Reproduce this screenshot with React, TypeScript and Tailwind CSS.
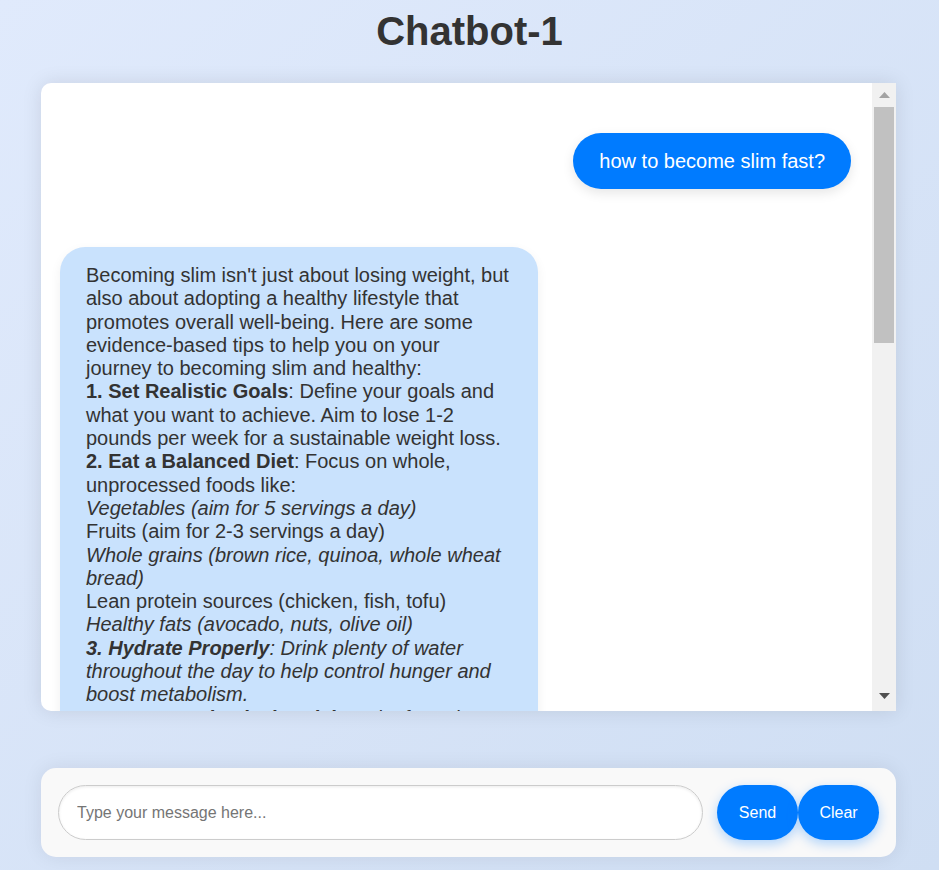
import React, { useState } from 'react';

type Message = { id: number; from: 'user' | 'bot' };

const messages: Message[] = [
  { id: 1, from: 'user' },
  { id: 2, from: 'bot' },
];

const BotReply: React.FC = () => (
  <>
    Becoming slim isn't just about losing weight, but also about adopting a healthy lifestyle that promotes overall
    well-being. Here are some evidence-based tips to help you on your journey to becoming slim and healthy:
    <br />
    <strong>1. Set Realistic Goals</strong>: Define your goals and what you want to achieve. Aim to lose 1-2 pounds
    per week for a sustainable weight loss.
    <br />
    <strong>2. Eat a Balanced Diet</strong>: Focus on whole, unprocessed foods like:
    <br />
    <em>Vegetables (aim for 5 servings a day)</em>
    <br />
    Fruits (aim for 2-3 servings a day)
    <br />
    <em>Whole grains (brown rice, quinoa, whole wheat bread)</em>
    <br />
    Lean protein sources (chicken, fish, tofu)
    <br />
    <em>
      Healthy fats (avocado, nuts, olive oil)
      <br />
      <strong>3. Hydrate Properly</strong>: Drink plenty of water throughout the day to help control hunger and boost
      metabolism.
      <br />
      <strong>4. Increase Physical Activity</strong>: Aim for at least 150 minutes of moderate-intensity exercise per
      week.
    </em>
  </>
);

const FakeScrollbar: React.FC = () => (
  <div className="w-[24px] shrink-0 bg-[#f1f1f1] flex flex-col">
    <div className="h-[23px] flex items-center justify-center">
      <svg width="11" height="6" viewBox="0 0 11 6">
        <polygon points="0,6 5.5,0 11,6" fill="#a3a3a3" />
      </svg>
    </div>
    <div className="mt-px mx-[2px] h-[236px] bg-[#c1c1c1]" />
    <div className="flex-1" />
    <div className="h-[25px] flex items-start justify-center pt-[7px]">
      <svg width="11" height="6" viewBox="0 0 11 6">
        <polygon points="0,0 11,0 5.5,6" fill="#505050" />
      </svg>
    </div>
  </div>
);

export default function App() {
  const [text, setText] = useState('');

  return (
    <div className="min-h-screen bg-linear-to-br from-[#e0eafc] to-[#cfdef3] font-['Liberation_Sans',Arial,sans-serif] pt-[8px] px-[41px] pb-[13px]">
      <h1 className="text-center text-[40px] leading-[46px] font-bold text-[#333]">Chatbot-1</h1>

      <div className="mt-[29px] w-[855px] h-[628px] bg-white rounded-l-[10px] shadow-[0_0_20px_rgba(0,0,0,0.1)] flex overflow-hidden">
        <div className="flex-1 min-w-0 pl-[19px] pr-[21px] pt-[50px] flex flex-col overflow-hidden">
          {messages.map((m) =>
            m.from === 'user' ? (
              <div
                key={m.id}
                className="self-end bg-[#007bff] text-white text-[20px] leading-[24px] px-[26px] py-[16px] rounded-full shadow-[0_4px_12px_rgba(0,0,0,0.1)]"
              >
                how to become slim fast?
              </div>
            ) : (
              <div
                key={m.id}
                className="self-start mt-[58px] w-[478px] shrink-0 bg-[#c9e2fd] text-[#333] text-[20px] leading-[23.3px] pl-[26px] pr-[28px] pt-[17px] pb-[20px] rounded-[25px] shadow-[0_4px_12px_rgba(0,0,0,0.06)]"
              >
                <BotReply />
              </div>
            )
          )}
        </div>
        <FakeScrollbar />
      </div>

      <div className="mt-[57px] w-[855px] h-[89px] bg-[#f9f9f9] rounded-[15px] shadow-[0_0_20px_rgba(0,0,0,0.08)] px-[17px] flex items-center">
        <input
          value={text}
          onChange={(e) => setText(e.target.value)}
          placeholder="Type your message here..."
          className="flex-1 min-w-0 h-[55px] mr-[14px] rounded-full border border-[#ccc] bg-white pl-[18px] pr-4 text-[16px] text-[#333] placeholder:text-[#757575] outline-none shadow-[inset_0_1px_3px_rgba(0,0,0,0.08)]"
        />
        <button className="w-[81px] h-[55px] rounded-full bg-[#007bff] text-white text-[16px] shadow-[0_4px_12px_rgba(0,123,255,0.3)]">
          Send
        </button>
        <button
          onClick={() => setText('')}
          className="w-[81px] h-[55px] rounded-full bg-[#007bff] text-white text-[16px] shadow-[0_4px_12px_rgba(0,123,255,0.3)]"
        >
          Clear
        </button>
      </div>
    </div>
  );
}
